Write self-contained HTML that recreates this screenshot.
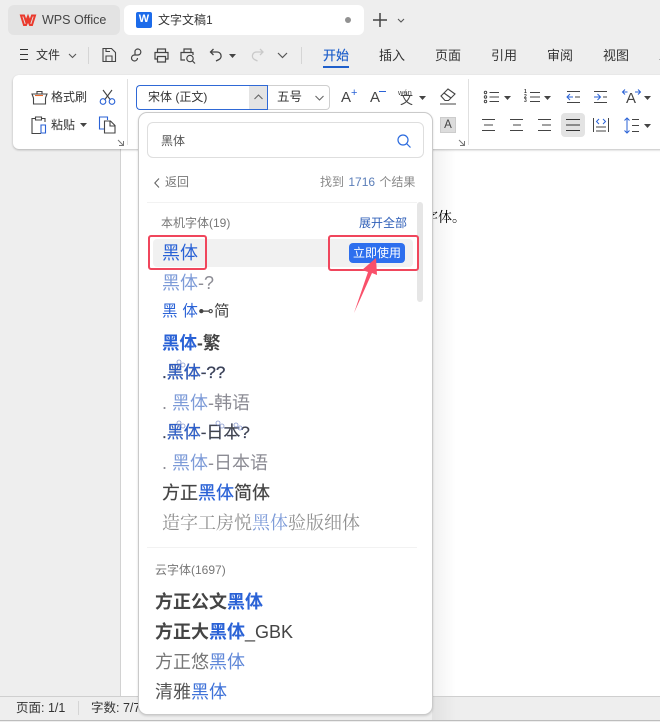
<!DOCTYPE html>
<html><head><meta charset="utf-8">
<style>
html,body{margin:0;padding:0}
body{width:660px;height:722px;overflow:hidden;background:#eee;position:relative;font-family:"Liberation Sans","Noto Sans CJK SC",sans-serif;color:#333}
.a{position:absolute;white-space:nowrap}
.t{position:absolute;white-space:nowrap;line-height:20px;height:20px}
svg{position:absolute;overflow:visible}
.b{color:#2a62d6}
.f{font-size:18px;line-height:24px;height:24px;color:#444;position:absolute;white-space:nowrap}
.l{color:#8c8c94}
</style></head><body>
<!-- tabs -->
<div class="a" style="left:8px;top:5px;width:112px;height:30px;background:#e3e3e3;border-radius:6px"></div>
<svg style="left:20px;top:14px" width="16" height="12" viewBox="0 0 16 12"><path d="M1 1.500h3l2 6 2-5 2 5 2-6h3L12 11h-2L8 6.500 6 11H4z" fill="none" stroke="#ea3a2d" stroke-width="2"/></svg>
<div class="t" style="left:42px;top:10px;font-size:12.500px;color:#444">WPS Office</div>
<div class="a" style="left:124px;top:5px;width:240px;height:30px;background:#fff;border-radius:6px"></div>
<div class="a" style="left:136px;top:12px;width:16px;height:16px;background:#1c6bea;border-radius:2px;color:#fff;font-size:11px;font-weight:bold;line-height:15px;text-align:center">W</div>
<div class="t" style="left:158px;top:10px;font-size:12px;color:#333">文字文稿1</div>
<div class="a" style="left:345px;top:17px;width:6px;height:6px;background:#919191;border-radius:50%"></div>
<svg style="left:373px;top:13px" width="14" height="14"><path d="M7 0v14M0 7h14" stroke="#444" stroke-width="1.500"/></svg>
<svg style="left:397px;top:18px" width="8" height="5"><path d="M1 1l3 3 3-3" fill="none" stroke="#555" stroke-width="1.100"/></svg>

<!-- menu row -->
<svg style="left:20px;top:49px" width="9" height="11"><path d="M0 .5h8M0 5.500h8M0 10.500h8" stroke="#333"/></svg>
<div class="t" style="left:36px;top:45px;font-size:12px">文件</div>
<svg style="left:68px;top:53px" width="9" height="6"><path d="M1 1l3.500 3.500L8 1" fill="none" stroke="#555" stroke-width="1.100"/></svg>
<div class="a" style="left:88px;top:47px;width:1px;height:17px;background:#d5d5d5"></div>
<svg style="left:101px;top:47px" width="16" height="16" fill="none" stroke="#444" stroke-width="1.100"><path d="M2 1.500h8.500l4 4v9h-12.500z"/><path d="M5 14v-5h6v5M5 1.500v3h4"/></svg>
<svg style="left:129px;top:47px" width="16" height="16" fill="none" stroke="#444" stroke-width="1.200"><path d="M6 8V4a3 3 0 1 1 3 4H5.500a3 3 0 1 0 3 3"/></svg>
<svg style="left:154px;top:48px" width="15" height="15" fill="none" stroke="#444" stroke-width="1.200"><path d="M3.500 4.500V1h8v3.500M3.500 11H1V4.500h13V11h-2.500M3.500 8.500h8V14h-8z"/></svg>
<svg style="left:180px;top:48px" width="16" height="16" fill="none" stroke="#444" stroke-width="1.200"><path d="M4 4V1h7v3M5 12H1V4.500h12V7"/><circle cx="10" cy="10.500" r="3.200"/><path d="M12.500 13l2.500 2.500"/></svg>
<svg style="left:209px;top:48px" width="15" height="14" fill="none" stroke="#444" stroke-width="1.300"><path d="M4.500 1L1.500 4l3 3M1.500 4H8a4 4 0 0 1 2 7.500L7 13"/></svg>
<svg style="left:229px;top:54px" width="7" height="4"><path d="M0 0h7L3.500 4z" fill="#444"/></svg>
<svg style="left:250px;top:48px" width="15" height="14" fill="none" stroke="#c9c9c9" stroke-width="1.300"><path d="M10 1l3 3-3 3M13 4H6.500a4 4 0 0 0-2 7.500l3 1.500"/></svg>
<svg style="left:277px;top:52px" width="11" height="7"><path d="M1 1l4.500 4.500L10 1" fill="none" stroke="#555" stroke-width="1.200"/></svg>
<div class="a" style="left:301px;top:47px;width:1px;height:17px;background:#d5d5d5"></div>
<div class="t" style="left:323px;top:46px;font-size:13px;color:#1f5fcb;-webkit-text-stroke:.2px #1f5fcb">开始</div>
<div class="a" style="left:323px;top:66px;width:26px;height:2px;background:#1f5fcb"></div>
<div class="t" style="left:379px;top:46px;font-size:13px">插入</div>
<div class="t" style="left:435px;top:46px;font-size:13px">页面</div>
<div class="t" style="left:491px;top:46px;font-size:13px">引用</div>
<div class="t" style="left:547px;top:46px;font-size:13px">审阅</div>
<div class="t" style="left:603px;top:46px;font-size:13px">视图</div>
<div class="t" style="left:659px;top:46px;font-size:13px">工</div>

<!-- document -->
<div class="a" style="left:121px;top:149px;width:539px;height:547px;background:#fff;box-shadow:-1px 0 0 #d2d2d2"></div>
<div class="t" style="left:424px;top:209px;font-size:14px;color:#000;font-family:'Liberation Serif','Noto Serif CJK SC',serif">字体。</div>
<div class="a" style="left:432px;top:149px;width:24px;height:572px;background:linear-gradient(90deg,rgba(0,0,0,.055),rgba(0,0,0,0))"></div>

<!-- ribbon -->
<div class="a" style="left:13px;top:75px;width:660px;height:74px;background:#fff;border-radius:6px;box-shadow:0 1px 2px rgba(0,0,0,.25)"></div>
<svg style="left:31px;top:89px" width="17" height="16" fill="none" stroke="#444" stroke-width="1.100"><path d="M1 5h15l-1.500 4v6h-12V9z"/><path d="M6 5V2.500h5V5"/><path d="M4 6.500h8" stroke="#ea6a2d"/></svg>
<div class="t" style="left:51px;top:87px;font-size:12px">格式刷</div>
<svg style="left:99px;top:89px" width="17" height="16" fill="none" stroke="#444" stroke-width="1.100"><path d="M4 1l7.500 10M13 1L5.500 11"/><circle cx="4" cy="12.500" r="2.800" stroke="#2a62d6"/><circle cx="13" cy="12.500" r="2.800" stroke="#2a62d6"/></svg>
<svg style="left:31px;top:116px" width="17" height="18" fill="none" stroke="#444" stroke-width="1.100"><path d="M4 2.500H1v15h9M11 2.500h3V6M4.500 1h6v3h-6z"/><path d="M10 9h4.500v8H10z" stroke="#2a62d6"/></svg>
<div class="t" style="left:51px;top:115px;font-size:12px">粘贴</div>
<svg style="left:80px;top:123px" width="7" height="4"><path d="M0 0h7L3.500 4z" fill="#444"/></svg>
<svg style="left:99px;top:116px" width="17" height="18" fill="none" stroke-width="1.100"><path d="M5 13H.5V1h8v3" stroke="#2a62d6"/><path d="M5.500 5h6l4.500 4.500V17H5.500zM11 5v5h5" stroke="#444"/></svg>
<svg style="left:118px;top:140px" width="6" height="6" fill="none" stroke="#777"><path d="M0 0l5.500 5.500M5.500 1v4.500H1"/></svg>
<div class="a" style="left:127px;top:79px;width:1px;height:66px;background:#e0e0e0"></div>

<!-- font box -->
<div class="a" style="left:136px;top:85px;width:113px;height:23px;border:1px solid #2f69d6;border-radius:4px 0 0 4px;border-right:0;background:#fff"></div>
<div class="a" style="left:249px;top:85px;width:18px;height:23px;background:#e4e4e4;border-top:1px solid #2f69d6;border-bottom:1px solid #2f69d6;border-right:1px solid #2f69d6"></div>
<div class="t" style="left:148px;top:87px;font-size:12px;color:#333">宋体 (正文)</div>
<svg style="left:254px;top:94px" width="9" height="6"><path d="M.5 5L4.500 1l4 4" fill="none" stroke="#666" stroke-width="1.100"/></svg>
<div class="a" style="left:268px;top:85px;width:61px;height:23px;border:1px solid #cfcfcf;border-left:0;border-radius:0 4px 4px 0"></div>
<div class="t" style="left:277px;top:87px;font-size:12.500px">五号</div>
<svg style="left:315px;top:95px" width="9" height="6"><path d="M.5 1l4 4 4-4" fill="none" stroke="#666" stroke-width="1.100"/></svg>
<div class="t" style="left:341px;top:88px;font-size:15px;color:#444;line-height:20px">A</div>
<div class="t" style="left:351px;top:83px;font-size:11px;color:#2a62d6">+</div>
<div class="t" style="left:370px;top:88px;font-size:15px;color:#444">A</div>
<div class="a" style="left:379px;top:91px;width:7px;height:1px;background:#2a62d6"></div>
<div class="t" style="left:398px;top:83px;font-size:7.500px;color:#444">wén</div>
<div class="t" style="left:400px;top:90px;font-size:13px;color:#444">文</div>
<svg style="left:419px;top:96px" width="7" height="4"><path d="M0 0h7L3.500 4z" fill="#444"/></svg>
<svg style="left:440px;top:88px" width="17" height="17" fill="none" stroke="#444" stroke-width="1.100"><path d="M1 8l7-7 7 5-6.500 6.500H5zM4 5l7 5M0 16h16"/></svg>
<div class="a" style="left:440px;top:117px;background:#dcdcdc;border:1px solid #ccc;font-size:11.500px;line-height:14px;text-align:center;color:#444;width:14px;height:14px">A</div>
<svg style="left:459px;top:140px" width="6" height="6" fill="none" stroke="#777"><path d="M0 0l5.500 5.500M5.500 1v4.500H1"/></svg>
<div class="a" style="left:468px;top:79px;width:1px;height:66px;background:#e0e0e0"></div>

<!-- paragraph tools row 1 -->
<svg style="left:484px;top:91px" width="15" height="12" fill="none" stroke="#444"><circle cx="1.500" cy="1.500" r="1.200"/><circle cx="1.500" cy="6" r="1.200"/><circle cx="1.500" cy="10.500" r="1.200"/><path d="M5.500 1.500H15M5.500 6H15M5.500 10.500H15"/></svg>
<svg style="left:504px;top:96px" width="7" height="4"><path d="M0 0h7L3.500 4z" fill="#444"/></svg>
<div class="a" style="left:524px;top:90px;font-size:5px;line-height:4.700px;color:#333;white-space:normal;width:5px;font-weight:bold">1<br>2<br>3</div>
<svg style="left:529px;top:91px" width="11" height="12" stroke="#444"><path d="M1 1.500h10M1 6h10M1 10.500h10"/></svg>
<svg style="left:544px;top:96px" width="7" height="4"><path d="M0 0h7L3.500 4z" fill="#444"/></svg>
<svg style="left:566px;top:91px" width="14" height="12" fill="none" stroke="#444"><path d="M1 .5h13M1 11.500h13M9 6h5"/><path d="M1 6h6M4 3L1 6l3 3" stroke="#2a62d6"/></svg>
<svg style="left:594px;top:91px" width="14" height="12" fill="none" stroke="#444"><path d="M0 .5h13M0 11.500h13M9 6h4"/><path d="M0 6h6M3.500 3L6.500 6l-3 3" stroke="#2a62d6"/></svg>
<div class="t" style="left:626px;top:89px;font-size:15px;color:#444;line-height:20px">A</div>
<svg style="left:622px;top:89px" width="19" height="6" fill="none" stroke="#2a62d6"><path d="M3 .500L.5 3 3 5.500M16 .500L18.500 3 16 5.500M.5 3h5M13 3h5.500"/></svg>
<svg style="left:644px;top:96px" width="7" height="4"><path d="M0 0h7L3.500 4z" fill="#444"/></svg>
<!-- row 2 -->
<svg style="left:482px;top:119px" width="14" height="12" stroke="#444"><path d="M0 .5h13M2 6h9M0 11.500h13"/></svg>
<svg style="left:510px;top:119px" width="14" height="12" stroke="#444"><path d="M0 .5h13M3 6h8M0 11.500h13"/></svg>
<svg style="left:538px;top:119px" width="14" height="12" stroke="#444"><path d="M0 .5h13M4 6h9M0 11.500h13"/></svg>
<div class="a" style="left:561px;top:113px;width:24px;height:24px;background:#e3e3e3;border-radius:4px"></div>
<svg style="left:566px;top:119px" width="14" height="12" stroke="#333"><path d="M0 .5h14M0 6h14M0 11.500h14"/></svg>
<svg style="left:593px;top:118px" width="16" height="14" fill="none" stroke="#444"><path d="M.5 0v14M15.500 0v14M3 13h10M3 9h10"/><path d="M6 1L3.500 3.500 6 6M10 1l2.500 2.500L10 6" stroke="#2a62d6"/></svg>
<svg style="left:624px;top:117px" width="15" height="17" fill="none"><path d="M3 1v15M.5 3.500L3 1l2.500 2.500M.5 13.500L3 16l2.500-2.500" stroke="#2a62d6"/><path d="M8 2.500h7M8 8.500h7M8 14.500h7" stroke="#444"/></svg>
<svg style="left:644px;top:124px" width="7" height="4"><path d="M0 0h7L3.500 4z" fill="#444"/></svg>

<!-- status bar -->
<div class="a" style="left:0;top:696px;width:660px;height:1px;background:#cfcfcf"></div>
<div class="a" style="left:0;top:720px;width:660px;height:1px;background:#bdbdbd"></div>
<div class="t" style="left:16px;top:698px;font-size:12.500px">页面: 1/1</div>
<div class="a" style="left:78px;top:701px;width:1px;height:14px;background:#d5d5d5"></div>
<div class="t" style="left:91px;top:698px;font-size:12.500px">字数: 7/7</div>

<!-- popup -->
<div class="a" style="left:138px;top:112px;width:293px;height:601px;background:#fff;border:1px solid #cacaca;border-radius:9px;box-shadow:0 1px 2px rgba(0,0,0,.15)"></div>
<div class="a" style="left:147px;top:122px;width:275px;height:34px;border:1px solid #dedede;border-radius:6px"></div>
<div class="t" style="left:161px;top:131px;font-size:12px;color:#555">黑体</div>
<svg style="left:397px;top:134px" width="14" height="14" fill="none" stroke="#2a6ade" stroke-width="1.200"><circle cx="6" cy="6" r="5"/><path d="M9.500 9.500l4 4"/></svg>
<svg style="left:154px;top:178px" width="6" height="10"><path d="M5 .5L.8 5 5 9.500" fill="none" stroke="#666" stroke-width="1.100"/></svg>
<div class="t" style="left:165px;top:172px;font-size:12px;color:#777">返回</div>
<div class="t" style="left:320px;top:172px;font-size:12px;color:#888;word-spacing:1px">找到 <span style="color:#5a7db8">1716</span> 个结果</div>
<div class="a" style="left:147px;top:202px;width:270px;height:1px;background:#f2f2f2"></div>
<div class="a" style="left:417px;top:202px;width:6px;height:100px;background:#e6e6e6;border-radius:3px"></div>
<div class="t" style="left:161px;top:213px;font-size:12px;color:#777">本机字体(19)</div>
<div class="t" style="left:359px;top:213px;font-size:12px;color:#2f5fb8">展开全部</div>
<div class="a" style="left:153px;top:239px;width:260px;height:28px;background:#f1f1f1;border-radius:4px"></div>
<div class="f" style="left:162px;top:241px"><span class="b">黑体</span></div>
<div class="a" style="left:349px;top:243px;width:56px;height:20px;background:#2e6fee;border-radius:4px;color:#fff;font-size:12px;line-height:20px;text-align:center">立即使用</div>
<div class="f l" style="left:162px;top:271px"><span style="color:#7d9bd8">黑体</span>-?</div>
<div class="f" style="left:162px;top:300px;font-size:15.500px;letter-spacing:.3px"><span class="b">黑 体</span>⊷简</div>
<div class="f" style="left:162px;top:331px;font-weight:bold;font-size:17.500px"><span class="b">黑体</span>-繁</div>
<div class="f" style="left:162px;top:361px;font-size:17px;-webkit-text-stroke:.3px #2a3f80">.<span class="b">黑体</span>-??</div>
<div class="f l" style="left:162px;top:391px">. <span style="color:#7d9bd8">黑体</span>-韩语</div>
<div class="f" style="left:162px;top:421px;font-size:17px;-webkit-text-stroke:.2px #2a3f80">.<span class="b">黑体</span>-日本?</div>
<div class="f l" style="left:162px;top:451px">. <span style="color:#7d9bd8">黑体</span>-日本语</div>
<div class="f" style="left:162px;top:481px;-webkit-text-stroke:.2px #444">方正<span class="b" style="-webkit-text-stroke:.2px #2a62d6">黑体</span>简体</div>
<div class="f l" style="left:162px;top:511px;font-family:'Liberation Serif','Noto Serif CJK SC',serif;color:#909090">造字工房悦<span style="color:#7d9bd8">黑体</span>验版细体</div>
<div class="a" style="left:147px;top:547px;width:270px;height:1px;background:#f2f2f2"></div>
<div class="t" style="left:155px;top:560px;font-size:12px;color:#777">云字体(1697)</div>
<div class="f" style="left:155px;top:590px;font-weight:bold">方正公文<span class="b">黑体</span></div>
<div class="f" style="left:155px;top:620px;font-weight:bold">方正大<span class="b">黑体</span><span style="font-weight:normal;color:#444">_GBK</span></div>
<div class="f" style="left:155px;top:650px;color:#777">方正悠<span style="color:#5f87d8">黑体</span></div>
<div class="f" style="left:155px;top:680px;color:#555">清雅<span style="color:#3f72d8">黑体</span></div>

<!-- decorative bows -->
<svg style="left:0;top:0" width="660" height="722" fill="none" stroke="#8a9bd0" stroke-width=".8"><circle cx="179" cy="362" r="2"/><circle cx="183" cy="365" r="2"/><circle cx="179" cy="423" r="2"/><circle cx="183" cy="426" r="2"/><circle cx="218" cy="423" r="2"/><circle cx="222" cy="426" r="2"/><circle cx="236" cy="425" r="2"/><circle cx="240" cy="428" r="2"/></svg>

<!-- annotations -->
<div class="a" style="left:148px;top:235px;width:59px;height:35px;border:2px solid #f0465c;border-radius:3px;box-sizing:border-box"></div>
<div class="a" style="left:328px;top:235px;width:91px;height:36px;border:2px solid #f0465c;border-radius:3px;box-sizing:border-box"></div>
<svg style="left:350px;top:255px" width="30" height="60"><path d="M4 58L18 17 12 15 26 3 27 20 22 18z" fill="#f9506a"/></svg>
</body></html>
